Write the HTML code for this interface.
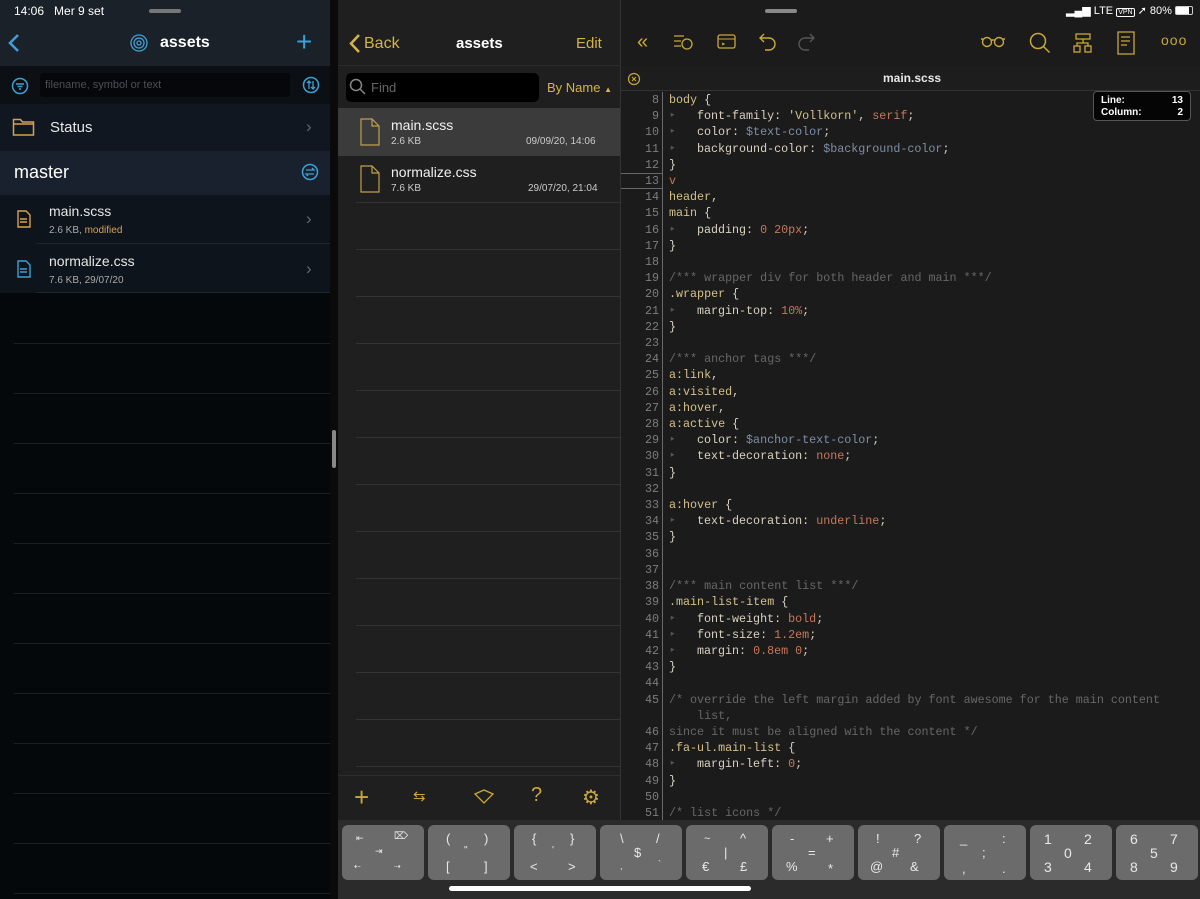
<!DOCTYPE html>
<html><head><meta charset="utf-8"><style>
*{margin:0;padding:0;box-sizing:border-box}
body{width:1200px;height:899px;overflow:hidden;background:#111;font-family:"Liberation Sans",sans-serif;position:relative}
.abs{position:absolute}
#left{left:0;top:0;width:330px;height:899px;background:#05080b}
#mid{left:338px;top:0;width:282px;height:820px;background:#1f1f1f}
#ed{left:620px;top:0;width:580px;height:820px;background:#1b1b1b;border-left:1px solid #333}
.code{font-family:"Liberation Mono",monospace;font-size:11.7px;line-height:16.2px;white-space:pre;color:#d9d2c2}
.ln{width:36px;text-align:right;color:#7d7d7d}
.s{color:#d4c08a}.c{color:#676767}.v{color:#c8775a}.b{color:#7e8ea6}.g{color:#555}
.key{position:absolute;top:825px;width:82px;height:55px;background:#6b6b6b;border-radius:6px;color:#e8e8e8;font-size:13px}
.key span{position:absolute}
</style></head><body>
<!-- LEFT -->
<div id="left" class="abs">
 <div class="abs" style="left:0;top:0;width:330px;height:66px;background:#1b2129"></div>
 <div class="abs" style="left:14px;top:4px;color:#fff;font-size:12px">14:06&nbsp;&nbsp; Mer 9 set</div>
 <div class="abs" style="left:149px;top:9px;width:32px;height:4px;border-radius:2px;background:#777"></div>
 <svg class="abs" style="left:6px;top:32px" width="16" height="22"><path d="M12 3 L4 11 L12 19" stroke="#3ea0d6" stroke-width="2.5" fill="none"/></svg>
 <svg class="abs" style="left:129px;top:33px" width="20" height="20"><g stroke="#3ea0d6" fill="none" stroke-width="1.3"><circle cx="10" cy="10" r="8"/><circle cx="10" cy="10" r="5"/><circle cx="10" cy="10" r="2"/></g></svg>
 <div class="abs" style="left:160px;top:34px;color:#fff;font-size:16px;font-weight:bold">assets</div>
 <div class="abs" style="left:296px;top:26px;color:#3ea0d6;font-size:28px;font-weight:300">+</div>
 <div class="abs" style="left:0;top:66px;width:330px;height:38px;background:#0c0f14"></div>
 <svg class="abs" style="left:11px;top:77px" width="18" height="18"><circle cx="9" cy="9" r="7.5" stroke="#3ea0d6" stroke-width="1.5" fill="none"/><path d="M5 7h8M6.5 9.5h5M8 12h2" stroke="#3ea0d6" stroke-width="1.4"/></svg>
 <div class="abs" style="left:40px;top:73px;width:250px;height:24px;background:#05070a;border-radius:4px;color:#4b5056;font-size:11px;padding:6px 5px">filename, symbol or text</div>
 <svg class="abs" style="left:302px;top:76px" width="18" height="18"><circle cx="9" cy="9" r="7.5" stroke="#3ea0d6" stroke-width="1.5" fill="none"/><path d="M7 5v8M5 7l2-2 2 2M11 13V5M9 11l2 2 2-2" stroke="#3ea0d6" stroke-width="1.3" fill="none"/></svg>
 <div class="abs" style="left:0;top:104px;width:330px;height:47px;background:#111720"></div>
 <svg class="abs" style="left:12px;top:117px" width="24" height="20"><path d="M1.5 2.5h7l2 2.5h11v13h-20z M1.5 7h20" stroke="#d6a154" stroke-width="1.5" fill="none"/></svg>
 <div class="abs" style="left:50px;top:119px;color:#e6e6e6;font-size:15px">Status</div>
 <div class="abs" style="left:306px;top:117px;color:#666;font-size:17px">›</div>
 <div class="abs" style="left:0;top:151px;width:330px;height:44px;background:#18212d"></div>
 <div class="abs" style="left:14px;top:162px;color:#fff;font-size:18px">master</div>
 <svg class="abs" style="left:301px;top:163px" width="18" height="18"><circle cx="9" cy="9" r="7.5" stroke="#3ea0d6" stroke-width="1.5" fill="none"/><path d="M5 7h8l-2-2M13 11H5l2 2" stroke="#3ea0d6" stroke-width="1.3" fill="none"/></svg>
 <div class="abs" style="left:0;top:195px;width:330px;height:98px;background:#0e141c"></div>
 <div class="abs" style="left:36px;top:243px;width:294px;height:1px;background:#1e2630"></div>
 <div class="abs" style="left:36px;top:292px;width:294px;height:1px;background:#1e2630"></div>
 <svg class="abs" style="left:17px;top:210px" width="14" height="18"><path d="M1 1h8l4 4v12H1z M3 9h7M3 12h7" stroke="#d6a154" stroke-width="1.4" fill="none"/></svg>
 <div class="abs" style="left:49px;top:203px;color:#e6e6e6;font-size:14px">main.scss</div>
 <div class="abs" style="left:49px;top:225px;color:#aaa;font-size:10px">2.6 KB, <span style="color:#d6a154">modified</span></div>
 <div class="abs" style="left:306px;top:209px;color:#666;font-size:17px">›</div>
 <svg class="abs" style="left:17px;top:260px" width="14" height="18"><path d="M1 1h8l4 4v12H1z M3 9h7M3 12h7" stroke="#3ea0d6" stroke-width="1.4" fill="none"/></svg>
 <div class="abs" style="left:49px;top:253px;color:#e6e6e6;font-size:14px">normalize.css</div>
 <div class="abs" style="left:49px;top:275px;color:#aaa;font-size:10px">7.6 KB, 29/07/20</div>
 <div class="abs" style="left:306px;top:259px;color:#666;font-size:17px">›</div>
 <div class="abs" style="left:14px;top:343px;width:316px;height:552px;background:repeating-linear-gradient(#1a1f25 0 1px,transparent 1px 50px)"></div>
</div>
<div class="abs" style="left:330px;top:0;width:8px;height:899px;background:#0a0a0a"></div>
<div class="abs" style="left:332px;top:430px;width:4px;height:38px;background:#888;border-radius:2px"></div>
<!-- MIDDLE -->
<div id="mid" class="abs">
 <div class="abs" style="left:0;top:0;width:282px;height:66px;border-bottom:1px solid #2c2c2c"></div>
 <svg class="abs" style="left:10px;top:33px" width="14" height="22"><path d="M11 2L3 10.5L11 19" stroke="#d4b44a" stroke-width="2.5" fill="none"/></svg>
 <div class="abs" style="left:26px;top:35px;color:#d4b44a;font-size:16px">Back</div>
 <div class="abs" style="left:118px;top:35px;color:#fff;font-size:15px;font-weight:bold">assets</div>
 <div class="abs" style="left:238px;top:35px;color:#d4b44a;font-size:15px">Edit</div>
 <div class="abs" style="left:8px;top:73px;width:193px;height:29px;background:#000;border-radius:5px"></div>
 <svg class="abs" style="left:11px;top:78px" width="18" height="18"><circle cx="7" cy="7" r="5.5" stroke="#888" stroke-width="1.5" fill="none"/><path d="M11 11l5 5" stroke="#888" stroke-width="1.5"/></svg>
 <div class="abs" style="left:33px;top:80px;color:#666;font-size:13px">Find</div>
 <div class="abs" style="left:209px;top:80px;color:#d4b44a;font-size:13px">By Name <span style="font-size:8px">▲</span></div>
 <div class="abs" style="left:0;top:108px;width:282px;height:48px;background:#3b3b3b"></div>
 <svg class="abs" style="left:22px;top:118px" width="20" height="28"><path d="M1 1h11l7 7v19H1z M12 1v7h7" stroke="#bfa04a" stroke-width="1.2" fill="none"/></svg>
 <div class="abs" style="left:53px;top:117px;color:#f0f0f0;font-size:14px">main.scss</div>
 <div class="abs" style="left:53px;top:136px;color:#ccc;font-size:10px">2.6 KB</div>
 <div class="abs" style="left:188px;top:136px;color:#ccc;font-size:10px">09/09/20, 14:06</div>
 <svg class="abs" style="left:22px;top:165px" width="20" height="28"><path d="M1 1h11l7 7v19H1z M12 1v7h7" stroke="#bfa04a" stroke-width="1.2" fill="none"/></svg>
 <div class="abs" style="left:53px;top:164px;color:#f0f0f0;font-size:14px">normalize.css</div>
 <div class="abs" style="left:53px;top:183px;color:#ccc;font-size:10px">7.6 KB</div>
 <div class="abs" style="left:190px;top:183px;color:#ccc;font-size:10px">29/07/20, 21:04</div>
 <div class="abs" style="left:18px;top:202px;width:264px;height:1px;background:#333"></div>
 <div class="abs" style="left:18px;top:249px;width:264px;height:526px;background:repeating-linear-gradient(#333 0 1px,transparent 1px 47px)"></div>
 <div class="abs" style="left:0;top:775px;width:282px;height:45px;border-top:1px solid #2c2c2c"></div>
 <div class="abs" style="left:16px;top:782px;color:#c9a83a;font-size:26px;font-weight:200">+</div>
 <div class="abs" style="left:75px;top:787px;color:#c9a83a;font-size:15px">⇆</div>
 <svg class="abs" style="left:135px;top:789px" width="22" height="16"><path d="M2 5L11 1L20 5L11 14Z" stroke="#c9a83a" stroke-width="1.3" fill="none"/></svg>
 <div class="abs" style="left:193px;top:784px;color:#c9a83a;font-size:20px">?</div>
 <div class="abs" style="left:244px;top:785px;color:#c9a83a;font-size:20px">⚙</div>
</div>
<!-- EDITOR -->
<div id="ed" class="abs">
 <div class="abs" style="left:144px;top:9px;width:32px;height:4px;border-radius:2px;background:#888"></div>
 <div class="abs" style="left:445px;top:4px;color:#fff;font-size:11px">▂▄▆ LTE <span style="border:1px solid #fff;border-radius:2px;font-size:7px;padding:0 1px">VPN</span> ➚ 80% <span style="display:inline-block;width:18px;height:9px;border:1px solid #ccc;border-radius:2px;vertical-align:-1px;background:linear-gradient(90deg,#fff 80%,transparent 80%)"></span></div>
 <div class="abs" style="left:16px;top:31px;color:#c9a83a;font-size:20px">«</div>
 <svg class="abs" style="left:52px;top:33px" width="20" height="18"><path d="M1 3h10M1 8h7M1 13h7" stroke="#c9a83a" stroke-width="1.3"/><circle cx="14" cy="11" r="5" stroke="#c9a83a" stroke-width="1.3" fill="none"/></svg>
 <svg class="abs" style="left:96px;top:34px" width="20" height="16"><rect x="1" y="1" width="17" height="13" rx="2" stroke="#c9a83a" stroke-width="1.3" fill="none"/><path d="M1 5h17M5 9l2 1-2 1" stroke="#c9a83a" stroke-width="1.1" fill="none"/></svg>
 <svg class="abs" style="left:138px;top:32px" width="18" height="20"><path d="M5 2L1 6l4 4M1 6h9a6 6 0 0 1 0 12H6" stroke="#c9a83a" stroke-width="1.4" fill="none"/></svg>
 <svg class="abs" style="left:176px;top:32px" width="18" height="20"><path d="M13 2l4 4-4 4M17 6H8a6 6 0 0 0 0 12h4" stroke="#555" stroke-width="1.4" fill="none"/></svg>
 <svg class="abs" style="left:360px;top:36px" width="24" height="12"><circle cx="6" cy="6" r="4.5" stroke="#c9a83a" stroke-width="1.4" fill="none"/><circle cx="18" cy="6" r="4.5" stroke="#c9a83a" stroke-width="1.4" fill="none"/><path d="M10 4h4M0 3h2M22 3h2" stroke="#c9a83a" stroke-width="1.4"/></svg>
 <svg class="abs" style="left:408px;top:32px" width="22" height="22"><circle cx="9" cy="9" r="7.5" stroke="#c9a83a" stroke-width="1.5" fill="none"/><path d="M14.5 14.5l6 6" stroke="#c9a83a" stroke-width="1.5"/></svg>
 <svg class="abs" style="left:452px;top:33px" width="20" height="20"><rect x="3" y="1" width="14" height="5" stroke="#c9a83a" stroke-width="1.3" fill="none"/><rect x="1" y="13" width="6" height="6" stroke="#c9a83a" stroke-width="1.3" fill="none"/><rect x="12" y="13" width="6" height="6" stroke="#c9a83a" stroke-width="1.3" fill="none"/><path d="M10 6v4M4 13v-3h11v3" stroke="#c9a83a" stroke-width="1.3" fill="none"/></svg>
 <svg class="abs" style="left:496px;top:31px" width="18" height="24"><path d="M1 1h16v22H1z M4 6h9M4 10h9M4 14h6" stroke="#c9a83a" stroke-width="1.3" fill="none"/></svg>
 <div class="abs" style="left:540px;top:32px;color:#c9a83a;font-size:14px;letter-spacing:1px">ooo</div>
 <div class="abs" style="left:0;top:66px;width:580px;height:25px;background:#1d1d1d;border-bottom:1px solid #333"></div>
 <svg class="abs" style="left:6px;top:72px" width="14" height="14"><circle cx="7" cy="7" r="5.5" stroke="#c9a83a" stroke-width="1.2" fill="none"/><path d="M5 5l4 4M9 5l-4 4" stroke="#c9a83a" stroke-width="1.1"/></svg>
 <div class="abs" style="left:262px;top:71px;color:#e8e8e8;font-size:12px;font-weight:bold">main.scss</div>
 <div class="abs" style="left:41px;top:92px;width:1px;height:728px;background:#6a6a6a"></div>
 <div class="abs" style="left:0;top:173px;width:42px;height:16px;border-top:1px solid #666;border-bottom:1px solid #666"></div>
 <div class="abs code" style="left:2px;top:92px"><div class="ln">8</div><div class="ln">9</div><div class="ln">10</div><div class="ln">11</div><div class="ln">12</div><div class="ln">13</div><div class="ln">14</div><div class="ln">15</div><div class="ln">16</div><div class="ln">17</div><div class="ln">18</div><div class="ln">19</div><div class="ln">20</div><div class="ln">21</div><div class="ln">22</div><div class="ln">23</div><div class="ln">24</div><div class="ln">25</div><div class="ln">26</div><div class="ln">27</div><div class="ln">28</div><div class="ln">29</div><div class="ln">30</div><div class="ln">31</div><div class="ln">32</div><div class="ln">33</div><div class="ln">34</div><div class="ln">35</div><div class="ln">36</div><div class="ln">37</div><div class="ln">38</div><div class="ln">39</div><div class="ln">40</div><div class="ln">41</div><div class="ln">42</div><div class="ln">43</div><div class="ln">44</div><div class="ln">45</div><div class="ln">&nbsp;</div><div class="ln">46</div><div class="ln">47</div><div class="ln">48</div><div class="ln">49</div><div class="ln">50</div><div class="ln">51</div></div>
 <div class="abs code" style="left:48px;top:92px"><span class="s">body</span> {
<span class="g">‣</span>   font-family: <span class="s">'Vollkorn'</span>, <span class="v">serif</span>;
<span class="g">‣</span>   color: <span class="b">$text-color</span>;
<span class="g">‣</span>   background-color: <span class="b">$background-color</span>;
}
<span class="v">v</span>
<span class="s">header</span>,
<span class="s">main</span> {
<span class="g">‣</span>   padding: <span class="v">0 20px</span>;
}

<span class="c">/*** wrapper div for both header and main ***/</span>
<span class="s">.wrapper</span> {
<span class="g">‣</span>   margin-top: <span class="v">10%</span>;
}

<span class="c">/*** anchor tags ***/</span>
<span class="s">a:link</span>,
<span class="s">a:visited</span>,
<span class="s">a:hover</span>,
<span class="s">a:active</span> {
<span class="g">‣</span>   color: <span class="b">$anchor-text-color</span>;
<span class="g">‣</span>   text-decoration: <span class="v">none</span>;
}

<span class="s">a:hover</span> {
<span class="g">‣</span>   text-decoration: <span class="v">underline</span>;
}


<span class="c">/*** main content list ***/</span>
<span class="s">.main-list-item</span> {
<span class="g">‣</span>   font-weight: <span class="v">bold</span>;
<span class="g">‣</span>   font-size: <span class="v">1.2em</span>;
<span class="g">‣</span>   margin: <span class="v">0.8em 0</span>;
}

<span class="c">/* override the left margin added by font awesome for the main content</span>
<span class="c">    list,</span>
<span class="c">since it must be aligned with the content */</span>
<span class="s">.fa-ul.main-list</span> {
<span class="g">‣</span>   margin-left: <span class="v">0</span>;
}

<span class="c">/* list icons */</span></div>
 <div class="abs" style="left:472px;top:91px;width:98px;height:30px;background:#050505;border:1px solid #555;border-radius:4px;color:#fff;font-size:10px;font-weight:bold;padding:3px 7px;line-height:12px"><div>Line:<span style="float:right">13</span></div><div>Column:<span style="float:right">2</span></div></div>
</div>
<!-- KEYBOARD -->
<div class="abs" style="left:338px;top:820px;width:862px;height:79px;background:#2b2b2b"></div>
<div class="key" style="left:342px"><span style="left:14px;top:8px;font-size:9px">⇤</span><span style="left:52px;top:6px;font-size:10px">⌦</span><span style="left:33px;top:21px;font-size:9px">⇥</span><span style="left:12px;top:37px;font-size:8px">⇠</span><span style="left:52px;top:37px;font-size:8px">⇢</span></div>
<div class="key" style="left:428px"><span style="left:18px;top:6px">(</span><span style="left:56px;top:6px">)</span><span style="left:36px;top:20px;font-size:10px">"</span><span style="left:18px;top:34px">[</span><span style="left:56px;top:34px">]</span></div>
<div class="key" style="left:514px"><span style="left:18px;top:6px">{</span><span style="left:56px;top:6px">}</span><span style="left:38px;top:20px;font-size:10px">'</span><span style="left:16px;top:34px">&lt;</span><span style="left:54px;top:34px">&gt;</span></div>
<div class="key" style="left:600px"><span style="left:20px;top:6px">\</span><span style="left:56px;top:6px">/</span><span style="left:34px;top:20px">$</span><span style="left:20px;top:36px;font-size:9px">,</span><span style="left:58px;top:34px;font-size:9px">`</span></div>
<div class="key" style="left:686px"><span style="left:18px;top:8px;font-size:11px">~</span><span style="left:54px;top:6px">^</span><span style="left:38px;top:20px">|</span><span style="left:16px;top:34px">€</span><span style="left:54px;top:34px">£</span></div>
<div class="key" style="left:772px"><span style="left:18px;top:6px">-</span><span style="left:54px;top:6px">+</span><span style="left:36px;top:20px">=</span><span style="left:14px;top:34px">%</span><span style="left:56px;top:36px">*</span></div>
<div class="key" style="left:858px"><span style="left:18px;top:6px">!</span><span style="left:56px;top:6px">?</span><span style="left:34px;top:20px">#</span><span style="left:12px;top:34px">@</span><span style="left:52px;top:34px">&amp;</span></div>
<div class="key" style="left:944px"><span style="left:16px;top:6px">_</span><span style="left:58px;top:6px">:</span><span style="left:38px;top:20px">;</span><span style="left:18px;top:36px">,</span><span style="left:58px;top:36px">.</span></div>
<div class="key" style="left:1030px;font-size:14px"><span style="left:14px;top:6px">1</span><span style="left:54px;top:6px">2</span><span style="left:34px;top:20px">0</span><span style="left:14px;top:34px">3</span><span style="left:54px;top:34px">4</span></div>
<div class="key" style="left:1116px;font-size:14px"><span style="left:14px;top:6px">6</span><span style="left:54px;top:6px">7</span><span style="left:34px;top:20px">5</span><span style="left:14px;top:34px">8</span><span style="left:54px;top:34px">9</span></div>
<div class="abs" style="left:449px;top:886px;width:302px;height:5px;border-radius:3px;background:#fff"></div>
</body></html>
